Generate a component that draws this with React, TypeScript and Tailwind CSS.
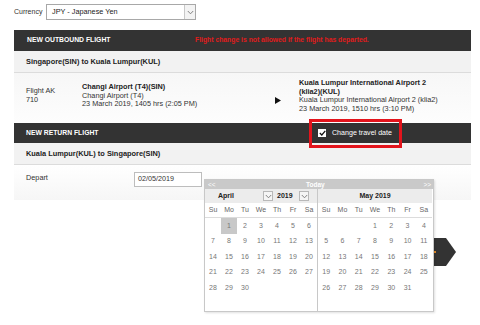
import React from "react";

function Chevron() {
  return (
    <svg width="7" height="5" viewBox="0 0 7 5">
      <path d="M0.8 1 L3.5 3.8 L6.2 1" fill="none" stroke="#777" strokeWidth="0.9" />
    </svg>
  );
}

function DaysGrid({ days, highlight }: { days: (number | null)[]; highlight?: number }) {
  const cells = [...days];
  while (cells.length < 42) cells.push(null);
  return (
    <div className="grid grid-cols-7 auto-rows-[15.5px]">
      {cells.map((d, i) => (
        <div
          key={i}
          className={
            "flex items-center justify-center text-[7px] text-[#777] " +
            (d !== null && d === highlight ? "bg-[#c8c8c8]" : "")
          }
        >
          {d ?? ""}
        </div>
      ))}
    </div>
  );
}

const dayNames = ["Su", "Mo", "Tu", "We", "Th", "Fr", "Sa"];

function DayHeader() {
  return (
    <div className="grid grid-cols-7 h-[15px] border-b border-[#dcdcdc]">
      {dayNames.map((n) => (
        <div key={n} className="flex items-center justify-center text-[7px] text-[#666]">
          {n}
        </div>
      ))}
    </div>
  );
}

export default function App() {
  const april: (number | null)[] = [null, ...Array.from({ length: 30 }, (_, i) => i + 1)];
  const may: (number | null)[] = [null, null, null, ...Array.from({ length: 31 }, (_, i) => i + 1)];

  return (
    <div className="relative w-[480px] h-[325px] overflow-hidden bg-white font-['Liberation_Sans',Arial,sans-serif] text-[#222]">
      {/* Currency */}
      <div className="flex items-center h-[16px] mt-[4px] ml-[14px]">
        <span className="text-[7px] text-[#333] w-[32px]">Currency</span>
        <div className="flex items-center w-[150px] h-[16px] border border-[#a8a8a8] bg-white">
          <span className="flex-1 pl-[5px] text-[7.3px] text-[#222]">JPY - Japanese Yen</span>
          <div className="w-[11px] h-[14px] border-l border-[#c8c8c8] bg-[#f3f3f3] flex items-center justify-center">
            <Chevron />
          </div>
        </div>
      </div>

      <div className="ml-[14px] mt-[10px] w-[457px]">
        {/* Outbound header */}
        <div className="flex items-center h-[21px] bg-[#333333] pl-[13px]">
          <span className="w-[168px] text-[6.8px] font-bold text-white">NEW OUTBOUND FLIGHT</span>
          <span className="text-[6.8px] font-bold text-[#e01b1b]">
            Flight change is not allowed if the flight has departed.
          </span>
        </div>
        <div className="flex items-center h-[22px] bg-[#f2f2f2] border-b border-[#dcdcdc] pl-[12px] text-[7.4px] font-bold">
          Singapore(SIN) to Kuala Lumpur(KUL)
        </div>
        <div className="flex items-start h-[50px] bg-gradient-to-b from-[#f7f7f7] to-[#fdfdfd] pl-[12px] text-[7.3px] leading-[8.5px]">
          <div className="w-[56px] pt-[14px] text-[#333]">
            <div>Flight AK</div>
            <div>710</div>
          </div>
          <div className="w-[193px] pt-[10px] text-[#333]">
            <div className="font-bold text-[#222]">Changi Airport (T4)(SIN)</div>
            <div>Changi Airport (T4)</div>
            <div>23 March 2019, 1405 hrs (2:05 PM)</div>
          </div>
          <div className="w-[24px] pt-[24px]">
            <svg width="6" height="7" viewBox="0 0 6 7">
              <path d="M0 0 L6 3.5 L0 7 Z" fill="#111" />
            </svg>
          </div>
          <div className="pt-[6px] text-[#333]">
            <div className="font-bold text-[#222]">Kuala Lumpur International Airport 2</div>
            <div className="font-bold text-[#222]">(klia2)(KUL)</div>
            <div>Kuala Lumpur International Airport 2 (klia2)</div>
            <div>23 March 2019, 1510 hrs (3:10 PM)</div>
          </div>
        </div>

        {/* Return header */}
        <div className="flex items-center h-[20px] bg-[#333333] pl-[12px]">
          <span className="w-[292px] text-[6.8px] font-bold text-white">NEW RETURN FLIGHT</span>
          <div className="flex items-center gap-[6px]">
            <div className="w-[8px] h-[8px] bg-white flex items-center justify-center">
              <svg width="7" height="6" viewBox="0 0 7 6">
                <path d="M0.8 3 L2.8 5 L6.3 0.8" fill="none" stroke="#111" strokeWidth="1.2" />
              </svg>
            </div>
            <span className="text-[7.1px] text-white">Change travel date</span>
          </div>
        </div>
        <div className="flex items-center h-[22px] bg-[#f2f2f2] border-b border-[#dcdcdc] pl-[12px] text-[7.4px] font-bold">
          Kuala Lumpur(KUL) to Singapore(SIN)
        </div>
        <div className="flex items-start h-[35px] bg-gradient-to-b from-white to-[#f6f6f6] pl-[12px]">
          <span className="w-[108px] pt-[8px] text-[7.3px] text-[#333]">Depart</span>
          <div className="mt-[7px] w-[68px] h-[15px] border border-[#bdbdbd] bg-white flex items-center pl-[3px] text-[7.2px] text-[#333]">
            02/05/2019
          </div>
        </div>
      </div>

      {/* Continue arrow button (behind calendar) */}
      <svg className="absolute left-[430px] top-[238px]" width="26" height="28" viewBox="0 0 26 28">
        <path d="M0 0 L16 0 L26 14 L16 28 L0 28 Z" fill="#333333" />
        <rect x="4" y="13" width="2" height="2" fill="#e08a2a" />
      </svg>

      {/* Red highlight box */}
      <div className="absolute left-[309px] top-[119px] w-[93px] h-[29px] border-[3px] border-[#e3141c]" />

      {/* Calendar */}
      <div className="absolute left-[204px] top-[179px] w-[230px] bg-white border border-[#c8c8c8] shadow-[1px_1px_2px_rgba(0,0,0,0.12)]">
        <div className="relative flex items-center h-[9px] bg-[#c9c9c9] text-[6.5px] text-white">
          <span className="absolute left-[3px]">&lt;&lt;</span>
          <span className="absolute left-[101px] font-bold">Today</span>
          <span className="absolute right-[2px]">&gt;&gt;</span>
        </div>
        <div className="flex">
          <div className="w-[113px] border-r border-[#c8c8c8]">
            <div className="flex items-center h-[14px] bg-[#ececec] text-[7px] font-bold text-[#222]">
              <div className="ml-[13px] w-[55px] flex items-center">
                <span className="flex-1">April</span>
                <div className="w-[10px] h-[10px] border border-[#b8b8b8] bg-[#f5f5f5] flex items-center justify-center">
                  <Chevron />
                </div>
              </div>
              <div className="ml-[2px] w-[34px] flex items-center">
                <span className="pl-[2px] flex-1">2019</span>
                <div className="w-[10px] h-[10px] border border-[#b8b8b8] bg-[#f5f5f5] flex items-center justify-center">
                  <Chevron />
                </div>
              </div>
            </div>
            <DayHeader />
            <DaysGrid days={april} highlight={1} />
          </div>
          <div className="w-[114px]">
            <div className="flex items-center justify-center h-[14px] bg-[#ececec] text-[7px] font-bold text-[#222]">
              May 2019
            </div>
            <DayHeader />
            <DaysGrid days={may} />
          </div>
        </div>
      </div>
    </div>
  );
}
